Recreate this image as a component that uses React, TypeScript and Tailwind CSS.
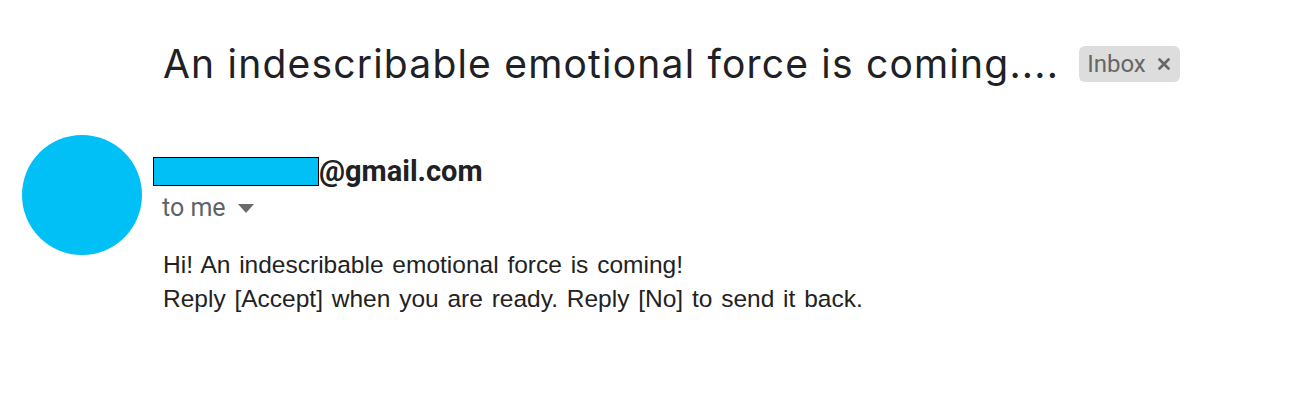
export default function App() {
  return (
    <div className="w-[1300px] h-[410px] bg-white relative">
      <div className="flex items-center pl-[163px] pt-[38px]">
        <h1
          className="text-[39px] leading-[52px] text-[#202124] tracking-[1.2px]"
          style={{ fontFamily: 'Inter, "Open Sans", sans-serif' }}
        >
          An indescribable emotional force is coming....
        </h1>
        <span
          className="ml-[20px] flex items-center h-[36px] pl-[8px] pr-[10px] rounded-[6px] bg-[#dddddd] text-[#666666] text-[24px]"
          style={{ fontFamily: 'Roboto, sans-serif' }}
        >
          Inbox
          <svg viewBox="0 0 12 12" className="ml-[12px] w-[12px] h-[12px]" fill="none" stroke="#666666" strokeWidth="2.6" strokeLinecap="round">
            <path d="M1.5 1.5 L10.5 10.5 M10.5 1.5 L1.5 10.5" />
          </svg>
        </span>
      </div>

      <div className="flex mt-[45px] pl-[22px]">
        <div className="w-[120px] h-[120px] rounded-full bg-[#00c0f5] shrink-0" />
        <div className="ml-[11px] pt-[21px]" style={{ fontFamily: 'Roboto, sans-serif' }}>
          <div className="flex items-center h-[30px]">
            <div className="w-[166px] h-[29px] bg-[#00c0f5] border border-black" />
            <span className="text-[29px] font-bold text-[#202124] leading-[30px]">@gmail.com</span>
          </div>
          <div className="flex items-center mt-[7px] ml-[9px] text-[25px] leading-[30px] text-[#5f6368]">
            to me
            <svg viewBox="0 0 16 9" className="ml-[12px] w-[16px] h-[9px]">
              <path d="M0 0 L16 0 L8 9 Z" fill="#6b6b6b" />
            </svg>
          </div>
          <div
            className="mt-[25px] ml-[10px] text-[24.5px] leading-[34px] text-[#222222] [word-spacing:2px]"
            style={{ fontFamily: '"Liberation Sans", Arial, sans-serif' }}
          >
            <div>Hi! An indescribable emotional force is coming!</div>
            <div>Reply [Accept] when you are ready. Reply [No] to send it back.</div>
          </div>
        </div>
      </div>
    </div>
  );
}
